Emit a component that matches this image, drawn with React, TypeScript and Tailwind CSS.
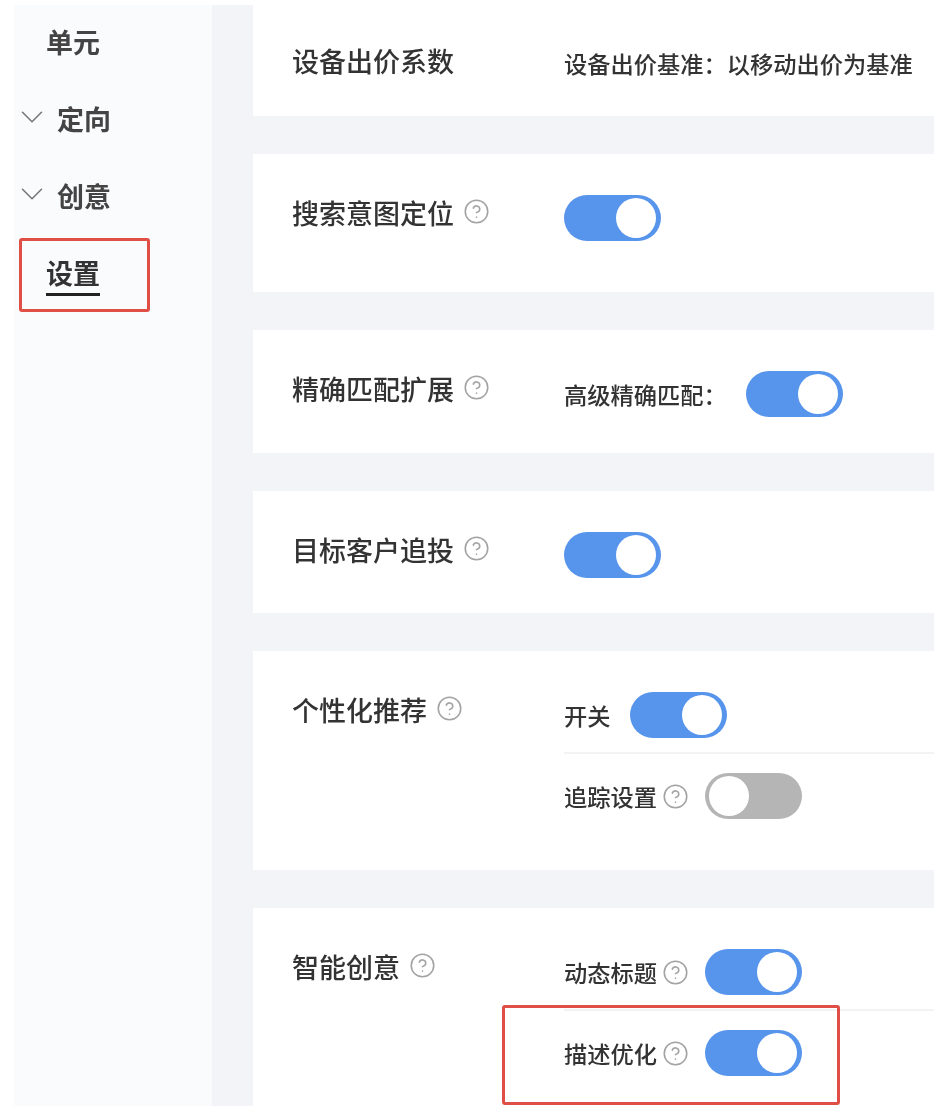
import { ChevronDown, CircleHelp } from 'lucide-react'

const font = "font-['Liberation_Sans','Noto_Sans_CJK_SC',sans-serif]"

const Toggle = ({ on = true }: { on?: boolean }) => (
  <div
    className={`flex h-[46px] w-[97px] shrink-0 items-center rounded-full ${
      on ? 'justify-end bg-[#5794ec] pr-[5px]' : 'justify-start bg-[#b5b5b5] pl-[4px]'
    }`}
  >
    <div className="h-[40px] w-[40px] rounded-full bg-white" />
  </div>
)

const Help = ({ className = '' }: { className?: string }) => (
  <CircleHelp className={`h-[27px] w-[27px] shrink-0 text-[#a3a3a3] ${className}`} strokeWidth={1.4} />
)

const Label = ({ text, help = true }: { text: string; help?: boolean }) => (
  <div className="flex w-[272px] shrink-0 items-center pt-[2px] text-[27px] font-medium leading-[36px] text-[#333]">
    <span>{text}</span>
    {help && <Help className="ml-[9px] -translate-y-[4px]" />}
  </div>
)

const SubRow = ({ text, on = true }: { text: string; on?: boolean }) => (
  <div className="flex items-center">
    <span className="w-[93px] translate-y-[2px] whitespace-nowrap text-[23.25px] font-medium leading-[46px] text-[#333]">
      {text}
    </span>
    <Help className="ml-[5px] mr-[16px]" />
    <Toggle on={on} />
  </div>
)

const NavItem = ({ text, arrow = false, active = false }: { text: string; arrow?: boolean; active?: boolean }) => (
  <div className={`flex h-[77px] items-center ${arrow ? '-ml-[1px]' : 'pl-[32px]'}`}>
    {arrow && (
      <ChevronDown className="mr-[6px] h-[38px] w-[38px] -translate-y-[4px] text-[#777]" strokeWidth={1} />
    )}
    <span
      className={`text-[27px] font-bold leading-[36px] ${
        active ? 'translate-y-[2px] border-b-[3px] border-[#222] text-[#333]' : 'text-[#444]'
      }`}
    >
      {text}
    </span>
  </div>
)

export default function App() {
  return (
    <div className={`relative flex h-[1110px] w-[942px] overflow-hidden bg-white pl-[14px] pr-2 pt-[5px] pb-1 blur-[0.7px] ${font}`}>
      {/* sidebar */}
      <div className="w-[198px] shrink-0 bg-[#fafbfd]">
        <NavItem text="单元" />
        <NavItem text="定向" arrow />
        <NavItem text="创意" arrow />
        <NavItem text="设置" active />
      </div>

      {/* settings list */}
      <div className="flex flex-1 flex-col gap-[38px] bg-[#f2f4f7] pl-[41px]">
        <div className="flex h-[111px] items-center bg-white pl-[39px] pt-[2px]">
          <Label text="设备出价系数" help={false} />
          <span className="translate-y-[4px] whitespace-nowrap text-[23.25px] font-medium text-[#333]">
            设备出价基准：以移动出价为基准
          </span>
        </div>

        <div className="flex h-[138px] items-start bg-white pl-[39px] pt-[41px]">
          <Label text="搜索意图定位" />
          <Toggle />
        </div>

        <div className="flex h-[123px] items-start bg-white pl-[39px] pt-[41px]">
          <Label text="精确匹配扩展" />
          <span className="mr-[25px] w-[157px] whitespace-nowrap text-[23.25px] font-medium leading-[50px] text-[#333]">
            高级精确匹配：
          </span>
          <Toggle />
        </div>

        <div className="flex h-[122px] items-start bg-white pl-[39px] pt-[41px]">
          <Label text="目标客户追投" />
          <Toggle />
        </div>

        <div className="flex h-[219px] items-start bg-white pl-[39px] pt-[41px]">
          <Label text="个性化推荐" />
          <div className="flex-1">
            <div className="flex items-center border-b-2 border-[#f2f3f5] pb-[14px]">
              <span className="mr-[20px] w-[46px] translate-y-[2px] whitespace-nowrap text-[23.25px] font-medium leading-[46px] text-[#333]">
                开关
              </span>
              <Toggle />
            </div>
            <div className="pt-[19px]">
              <SubRow text="追踪设置" on={false} />
            </div>
          </div>
        </div>

        <div className="flex flex-1 items-start bg-white pl-[39px] pt-[41px]">
          <Label text="智能创意" />
          <div className="flex-1">
            <div className="border-b-2 border-[#f2f3f5] pb-[14px]">
              <SubRow text="动态标题" />
            </div>
            <div className="pt-[19px]">
              <SubRow text="描述优化" />
            </div>
          </div>
        </div>
      </div>

      {/* red highlight boxes */}
      <div className="absolute left-[19px] top-[238px] h-[74px] w-[131px] rounded-[3px] border-[3px] border-[#df4f45]" />
      <div className="absolute left-[502px] top-[1005px] h-[100px] w-[338px] rounded-[3px] border-[3px] border-[#df4f45]" />
    </div>
  )
}
